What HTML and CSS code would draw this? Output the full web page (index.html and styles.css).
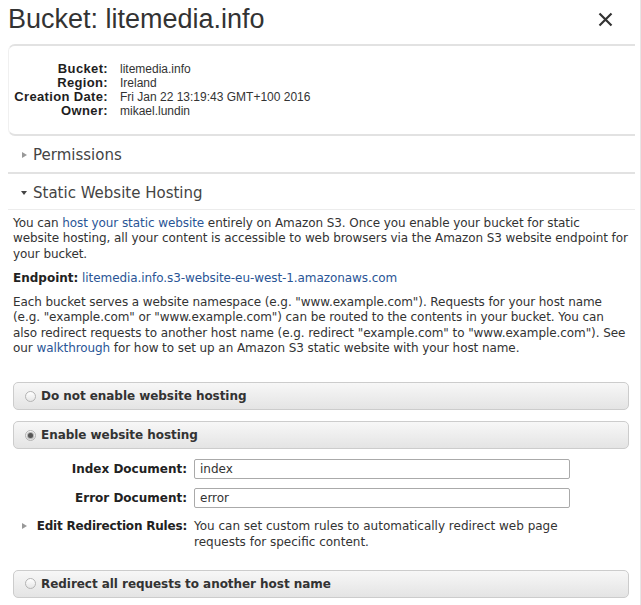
FILE: index.html
```html
<!DOCTYPE html>
<html lang="en">
<head>
<meta charset="utf-8">
<title>Bucket: litemedia.info</title>
<link rel="stylesheet" href="styles.css">
</head>
<body>
<div class="dialog">
  <header class="title-bar">
    <h1 class="title">Bucket: litemedia.info</h1>
    <button class="close" type="button" aria-label="Close">
      <svg width="15" height="15" viewBox="0 0 15 15"><path d="M1.5 1.5 L13.5 13.5 M13.5 1.5 L1.5 13.5" stroke="#333" stroke-width="2.2" fill="none"/></svg>
    </button>
  </header>

  <section class="details">
    <div class="props">
      <span class="prop-label">Bucket:</span><span class="prop-value">litemedia.info</span>
      <span class="prop-label">Region:</span><span class="prop-value">Ireland</span>
      <span class="prop-label">Creation Date:</span><span class="prop-value">Fri Jan 22 13:19:43 GMT+100 2016</span>
      <span class="prop-label">Owner:</span><span class="prop-value">mikael.lundin</span>
    </div>
  </section>

  <section class="group group-collapsed">
    <div class="group-head"><span class="arrow"><span class="tri-right"></span></span>Permissions</div>
  </section>

  <section class="group group-open">
    <div class="group-head"><span class="arrow"><span class="tri-down"></span></span>Static Website Hosting</div>
    <div class="group-body">
      <p class="text">You can <a class="link" href="#">host your static website</a> entirely on Amazon S3. Once you enable your bucket for static<br>website hosting, all your content is accessible to web browsers via the Amazon S3 website endpoint for<br>your bucket.</p>
      <p class="text"><b>Endpoint:</b> <a class="link" href="#">litemedia.info.s3-website-eu-west-1.amazonaws.com</a></p>
      <p class="text">Each bucket serves a website namespace (e.g. "www.example.com"). Requests for your host name<br>(e.g. "example.com" or "www.example.com") can be routed to the contents in your bucket. You can<br>also redirect requests to another host name (e.g. redirect "example.com" to "www.example.com"). See<br>our <a class="link" href="#">walkthrough</a> for how to set up an Amazon S3 static website with your host name.</p>

      <div class="option option-first"><span class="radio"></span><span class="option-label">Do not enable website hosting</span></div>
      <div class="option"><span class="radio radio-checked"></span><span class="option-label">Enable website hosting</span></div>

      <div class="form">
        <label class="form-label">Index Document:</label>
        <input class="field" type="text" value="index">
        <label class="form-label">Error Document:</label>
        <input class="field" type="text" value="error">
        <span class="form-label form-label-top"><span class="tri-right tri-small"></span><span class="rules-label">Edit Redirection Rules:</span></span>
        <span class="form-note">You can set custom rules to automatically redirect web page requests for specific content.</span>
      </div>

      <div class="option option-last"><span class="radio"></span><span class="option-label">Redirect all requests to another host name</span></div>
    </div>
  </section>
</div>
</body>
</html>
```

FILE: styles.css
```css
html, body {
  margin: 0;
  padding: 0;
  background: #fff;
}

.dialog {
  box-sizing: border-box;
  width: 641px;
  min-height: 605px;
  padding: 0 5px 0 8px;
  border-right: 1px solid #e6e6e6;
  font-family: "DejaVu Sans", Verdana, sans-serif;
  font-size: 12px;
  color: #333;
}

.title-bar {
  display: flex;
  justify-content: space-between;
  align-items: flex-start;
  box-sizing: border-box;
  height: 44px;
  padding-top: 4px;
}

.title {
  margin: 0;
  font-family: "Liberation Sans", Arial, sans-serif;
  font-weight: normal;
  font-size: 27px;
  line-height: 30px;
  color: #333;
}

.close {
  margin: 8px 22px 0 0;
  padding: 0;
  border: 0;
  background: none;
  width: 15px;
  height: 15px;
  line-height: 0;
}

.details {
  box-sizing: border-box;
  height: 92px;
  padding: 16px 0 16px;
  border-top: 2px solid #e2e2e2;
  border-bottom: 2px solid #e2e2e2;
  border-left: 1px solid #f0f0f0;
  border-radius: 7px 0 0 7px;
}

.props {
  display: grid;
  grid-template-columns: 99px auto;
  column-gap: 12px;
  font-family: "Liberation Sans", Arial, sans-serif;
  line-height: 14px;
}

.prop-label {
  text-align: right;
  font-weight: bold;
  font-size: 13px;
  letter-spacing: 0.35px;
  color: #1e1e1e;
}

.prop-value {
  font-size: 12px;
  color: #333;
}

.group-head {
  display: flex;
  align-items: center;
  box-sizing: border-box;
  height: 36px;
  padding: 2px 0 0 12px;
  font-size: 15px;
  color: #444;
}

.group-collapsed {
  border-bottom: 2px solid #e2e2e2;
}

.group-open > .group-head {
  border-bottom: 1px solid #ececec;
}

.arrow {
  display: flex;
  justify-content: center;
  align-items: center;
  width: 8px;
  margin-right: 5px;
}

.tri-right {
  display: inline-block;
  width: 0;
  height: 0;
  border-top: 3.5px solid transparent;
  border-bottom: 3.5px solid transparent;
  border-left: 5px solid #999;
}

.tri-down {
  display: inline-block;
  width: 0;
  height: 0;
  border-left: 3.5px solid transparent;
  border-right: 3.5px solid transparent;
  border-top: 4px solid #444;
  margin-top: 1px;
}

.group-body {
  padding: 6px 5px 0;
}

.text {
  margin: 0 0 9px;
  line-height: 15.3px;
  letter-spacing: -0.08px;
  white-space: nowrap;
}

.text b {
  color: #222;
  letter-spacing: 0;
}

.link {
  color: #2a5596;
  text-decoration: none;
}

.option {
  display: flex;
  align-items: center;
  box-sizing: border-box;
  height: 28px;
  margin: 0 1px 11px 0;
  padding-left: 11px;
  border: 1px solid #cccccc;
  border-radius: 5px;
  background: linear-gradient(#f7f7f7, #e4e4e4);
}

.option-first {
  margin-top: 26px;
}

.option-label {
  font-weight: bold;
  color: #333;
  letter-spacing: -0.05px;
}

.radio {
  box-sizing: border-box;
  width: 11px;
  height: 11px;
  margin-right: 5px;
  border: 1px solid #b4b4b4;
  border-radius: 50%;
  background: linear-gradient(#ffffff, #e6e6e6);
  display: flex;
  justify-content: center;
  align-items: center;
}

.radio-checked::after {
  content: "";
  width: 5px;
  height: 5px;
  border-radius: 50%;
  background: #555;
  box-shadow: 0 0 1px 1px #aaa;
}

.form {
  display: grid;
  grid-template-columns: 174px 376px;
  column-gap: 7px;
  row-gap: 9px;
  align-items: center;
  margin: -1px 0 20px;
}

.form-label {
  text-align: right;
  font-weight: bold;
  color: #222;
}

.form-label-top {
  align-self: start;
  line-height: 15.3px;
  margin-top: 2px;
}

.rules-label {
  letter-spacing: -0.2px;
}

.tri-small {
  margin-right: 10px;
  vertical-align: 1px;
}

.field {
  box-sizing: border-box;
  height: 20px;
  width: 376px;
  margin: 0;
  padding: 0 5px;
  border: 1px solid #aaa;
  border-radius: 2px;
  font-family: "DejaVu Sans", Verdana, sans-serif;
  font-size: 12px;
  color: #333;
}

.form-note {
  line-height: 15.3px;
  margin-top: 2px;
}

.option-last {
  margin-bottom: 0;
}
```
